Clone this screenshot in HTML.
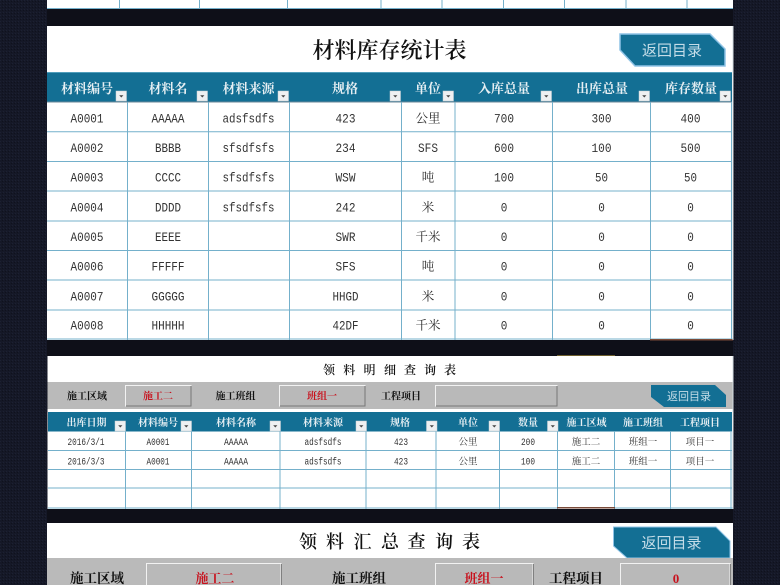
<!DOCTYPE html>
<html lang="zh"><head><meta charset="utf-8"><title>材料库存统计表</title>
<style>
html,body{margin:0;padding:0;background:#151827;width:780px;height:585px;overflow:hidden}
svg{display:block}
text{text-anchor:middle;font-family:"Liberation Sans","Noto Serif CJK SC",serif;fill:#333}
.m{font-family:"Liberation Mono","Noto Serif CJK SC",monospace;font-size:13px;fill:#333}
.s{font-family:"Liberation Mono","Noto Serif CJK SC",monospace;font-size:10px;fill:#333}
.c{font-family:"Noto Serif CJK SC",serif;font-size:12.5px;fill:#2c2c2c}
.c2{font-family:"Noto Serif CJK SC",serif;font-size:9.5px;fill:#333}
.h{font-family:"Noto Serif CJK SC",serif;font-size:13px;font-weight:700;fill:#e6eff3}
.h2{font-family:"Noto Serif CJK SC",serif;font-size:10px;font-weight:700;fill:#e6eff3}
.l{font-family:"Noto Serif CJK SC",serif;font-size:10px;font-weight:700;fill:#111}
.r{font-family:"Noto Serif CJK SC",serif;font-size:10px;font-weight:700;fill:#c8101c}
.L{font-family:"Noto Serif CJK SC",serif;font-size:13.5px;font-weight:700;fill:#111}
.R{font-family:"Noto Serif CJK SC",serif;font-size:13px;font-weight:700;fill:#c8101c}
.b{font-family:"Noto Sans CJK SC",sans-serif;fill:#c5dde8}
.t{font-family:"Noto Serif CJK SC",serif;font-weight:600;fill:#111}
.g line{stroke:#74b0cb;stroke-width:1}
</style></head><body>
<svg width="780" height="585" viewBox="0 0 780 585" xmlns="http://www.w3.org/2000/svg">
<defs>
<pattern id="tx" width="3" height="3" patternUnits="userSpaceOnUse"><rect width="3" height="3" fill="#151827"/><rect width="1" height="1" fill="#1c2032"/><rect x="2" y="1" width="1" height="1" fill="#0f111d"/></pattern>
<g id="f"><rect width="10.500" height="10" fill="#eef0f2" stroke="#c9cfd4" stroke-width=".5"/><path d="M3.200 4.200h4.200l-2.100 2.300z" fill="#444"/></g>
</defs>
<rect width="780" height="585" fill="url(#tx)"/>
<rect x="47" y="9" width="686" height="17" fill="#0e0f18"/>
<rect x="47" y="340" width="686" height="16" fill="#0e0f18"/>
<rect x="47" y="509" width="686" height="14" fill="#0e0f18"/>

<!-- top fragment -->
<rect x="47" y="0" width="686" height="9" fill="#fff"/>
<g class="g">
<line x1="47" y1="8.500" x2="733" y2="8.500"/>
<line x1="119.500" y1="0" x2="119.500" y2="9"/><line x1="199.500" y1="0" x2="199.500" y2="9"/><line x1="287.500" y1="0" x2="287.500" y2="9"/><line x1="381" y1="0" x2="381" y2="9"/><line x1="442" y1="0" x2="442" y2="9"/><line x1="503.500" y1="0" x2="503.500" y2="9"/><line x1="564.500" y1="0" x2="564.500" y2="9"/><line x1="626" y1="0" x2="626" y2="9"/><line x1="687" y1="0" x2="687" y2="9"/>
</g>

<!-- panel 1 -->
<rect x="47" y="26" width="686" height="314" fill="#fff"/>
<rect x="47" y="72" width="685" height="30" fill="#136f94"/>
<rect x="47" y="72" width="685" height="1" fill="#4f9dbb"/>
<rect x="47" y="101.500" width="685" height="1" fill="#6b8797"/>
<g class="g">
<line x1="47" y1="131.800" x2="732" y2="131.800"/><line x1="47" y1="161.500" x2="732" y2="161.500"/><line x1="47" y1="191" x2="732" y2="191"/><line x1="47" y1="221" x2="732" y2="221"/><line x1="47" y1="250.500" x2="732" y2="250.500"/><line x1="47" y1="280" x2="732" y2="280"/><line x1="47" y1="310" x2="732" y2="310"/><line x1="47" y1="339" x2="733" y2="339"/>
<line x1="127.500" y1="102" x2="127.500" y2="340"/><line x1="208.500" y1="102" x2="208.500" y2="340"/><line x1="289.500" y1="102" x2="289.500" y2="340"/><line x1="401.500" y1="102" x2="401.500" y2="340"/><line x1="455" y1="102" x2="455" y2="340"/><line x1="552.500" y1="102" x2="552.500" y2="340"/><line x1="650.500" y1="102" x2="650.500" y2="340"/><line x1="731.500" y1="102" x2="731.500" y2="340"/>
</g>
<rect x="650" y="339" width="83" height="1.500" fill="#7a4a38"/>
<text class="t" x="389.500" y="58" font-size="22">材料库存统计表</text>
<polygon points="620,34 710,34 725,49 725,66 635,66 620,50" fill="#136f94" stroke="#8fc3e6" stroke-width="1.500"/>
<text class="b" x="672" y="55.500" font-size="15">返回目录</text>

<text class="h" x="87" y="93">材料编号</text><text class="h" x="168" y="93">材料名</text><text class="h" x="248.500" y="93">材料来源</text><text class="h" x="345" y="93">规格</text><text class="h" x="428" y="93">单位</text><text class="h" x="504" y="93">入库总量</text><text class="h" x="602" y="93">出库总量</text><text class="h" x="691" y="93">库存数量</text>
<use href="#f" x="116" y="91"/><use href="#f" x="197" y="91"/><use href="#f" x="278" y="91"/><use href="#f" x="390" y="91"/><use href="#f" x="443" y="91"/><use href="#f" x="541" y="91"/><use href="#f" x="639" y="91"/><use href="#f" x="720" y="91"/>

<g lengthAdjust="spacingAndGlyphs">
<text class="m" x="87" y="122.500" textLength="33" lengthAdjust="spacingAndGlyphs">A0001</text><text class="m" x="168" y="122.500" textLength="33" lengthAdjust="spacingAndGlyphs">AAAAA</text><text class="m" x="248.500" y="122.500" textLength="52" lengthAdjust="spacingAndGlyphs">adsfsdfs</text><text class="m" x="345.500" y="122.500" textLength="20" lengthAdjust="spacingAndGlyphs">423</text><text class="c" x="428" y="122.500">公里</text><text class="m" x="504" y="122.500" textLength="20" lengthAdjust="spacingAndGlyphs">700</text><text class="m" x="601.500" y="122.500" textLength="20" lengthAdjust="spacingAndGlyphs">300</text><text class="m" x="690.500" y="122.500" textLength="20" lengthAdjust="spacingAndGlyphs">400</text>
<text class="m" x="87" y="152" textLength="33" lengthAdjust="spacingAndGlyphs">A0002</text><text class="m" x="168" y="152" textLength="26" lengthAdjust="spacingAndGlyphs">BBBB</text><text class="m" x="248.500" y="152" textLength="52" lengthAdjust="spacingAndGlyphs">sfsdfsfs</text><text class="m" x="345.500" y="152" textLength="20" lengthAdjust="spacingAndGlyphs">234</text><text class="m" x="428" y="152" textLength="20" lengthAdjust="spacingAndGlyphs">SFS</text><text class="m" x="504" y="152" textLength="20" lengthAdjust="spacingAndGlyphs">600</text><text class="m" x="601.500" y="152" textLength="20" lengthAdjust="spacingAndGlyphs">100</text><text class="m" x="690.500" y="152" textLength="20" lengthAdjust="spacingAndGlyphs">500</text>
<text class="m" x="87" y="181.500" textLength="33" lengthAdjust="spacingAndGlyphs">A0003</text><text class="m" x="168" y="181.500" textLength="26" lengthAdjust="spacingAndGlyphs">CCCC</text><text class="m" x="248.500" y="181.500" textLength="52" lengthAdjust="spacingAndGlyphs">sfsdfsfs</text><text class="m" x="345.500" y="181.500" textLength="20" lengthAdjust="spacingAndGlyphs">WSW</text><text class="c" x="428" y="181.500">吨</text><text class="m" x="504" y="181.500" textLength="20" lengthAdjust="spacingAndGlyphs">100</text><text class="m" x="601.500" y="181.500" textLength="13" lengthAdjust="spacingAndGlyphs">50</text><text class="m" x="690.500" y="181.500" textLength="13" lengthAdjust="spacingAndGlyphs">50</text>
<text class="m" x="87" y="211.500" textLength="33" lengthAdjust="spacingAndGlyphs">A0004</text><text class="m" x="168" y="211.500" textLength="26" lengthAdjust="spacingAndGlyphs">DDDD</text><text class="m" x="248.500" y="211.500" textLength="52" lengthAdjust="spacingAndGlyphs">sfsdfsfs</text><text class="m" x="345.500" y="211.500" textLength="20" lengthAdjust="spacingAndGlyphs">242</text><text class="c" x="428" y="211.500">米</text><text class="m" x="504" y="211.500" textLength="6.600" lengthAdjust="spacingAndGlyphs">0</text><text class="m" x="601.500" y="211.500" textLength="6.600" lengthAdjust="spacingAndGlyphs">0</text><text class="m" x="690.500" y="211.500" textLength="6.600" lengthAdjust="spacingAndGlyphs">0</text>
<text class="m" x="87" y="241" textLength="33" lengthAdjust="spacingAndGlyphs">A0005</text><text class="m" x="168" y="241" textLength="26" lengthAdjust="spacingAndGlyphs">EEEE</text><text class="m" x="345.500" y="241" textLength="20" lengthAdjust="spacingAndGlyphs">SWR</text><text class="c" x="428" y="241">千米</text><text class="m" x="504" y="241" textLength="6.600" lengthAdjust="spacingAndGlyphs">0</text><text class="m" x="601.500" y="241" textLength="6.600" lengthAdjust="spacingAndGlyphs">0</text><text class="m" x="690.500" y="241" textLength="6.600" lengthAdjust="spacingAndGlyphs">0</text>
<text class="m" x="87" y="270.500" textLength="33" lengthAdjust="spacingAndGlyphs">A0006</text><text class="m" x="168" y="270.500" textLength="33" lengthAdjust="spacingAndGlyphs">FFFFF</text><text class="m" x="345.500" y="270.500" textLength="20" lengthAdjust="spacingAndGlyphs">SFS</text><text class="c" x="428" y="270.500">吨</text><text class="m" x="504" y="270.500" textLength="6.600" lengthAdjust="spacingAndGlyphs">0</text><text class="m" x="601.500" y="270.500" textLength="6.600" lengthAdjust="spacingAndGlyphs">0</text><text class="m" x="690.500" y="270.500" textLength="6.600" lengthAdjust="spacingAndGlyphs">0</text>
<text class="m" x="87" y="300.500" textLength="33" lengthAdjust="spacingAndGlyphs">A0007</text><text class="m" x="168" y="300.500" textLength="33" lengthAdjust="spacingAndGlyphs">GGGGG</text><text class="m" x="345.500" y="300.500" textLength="26" lengthAdjust="spacingAndGlyphs">HHGD</text><text class="c" x="428" y="300.500">米</text><text class="m" x="504" y="300.500" textLength="6.600" lengthAdjust="spacingAndGlyphs">0</text><text class="m" x="601.500" y="300.500" textLength="6.600" lengthAdjust="spacingAndGlyphs">0</text><text class="m" x="690.500" y="300.500" textLength="6.600" lengthAdjust="spacingAndGlyphs">0</text>
<text class="m" x="87" y="329.500" textLength="33" lengthAdjust="spacingAndGlyphs">A0008</text><text class="m" x="168" y="329.500" textLength="33" lengthAdjust="spacingAndGlyphs">HHHHH</text><text class="m" x="345.500" y="329.500" textLength="26" lengthAdjust="spacingAndGlyphs">42DF</text><text class="c" x="428" y="329.500">千米</text><text class="m" x="504" y="329.500" textLength="6.600" lengthAdjust="spacingAndGlyphs">0</text><text class="m" x="601.500" y="329.500" textLength="6.600" lengthAdjust="spacingAndGlyphs">0</text><text class="m" x="690.500" y="329.500" textLength="6.600" lengthAdjust="spacingAndGlyphs">0</text>
</g>

<!-- panel 2 -->
<rect x="47.500" y="356" width="685.500" height="153" fill="#fff"/>
<rect x="557" y="355" width="58" height="1" fill="#6e5f2e"/>
<text class="t" x="329" y="374" font-size="12" font-weight="700">领</text><text class="t" x="349.300" y="374" font-size="12">料</text><text class="t" x="369.500" y="374" font-size="12">明</text><text class="t" x="390" y="374" font-size="12">细</text><text class="t" x="410" y="374" font-size="12">查</text><text class="t" x="430" y="374" font-size="12">询</text><text class="t" x="450" y="374" font-size="12">表</text>
<rect x="47.500" y="382" width="685.500" height="27" fill="#bababa"/>
<g fill="#b9b9b9" stroke-width="1">
<rect x="125.500" y="385.500" width="65.500" height="20.500" stroke="#f2f2f2"/><path d="M191 386v20h-65" fill="none" stroke="#777"/>
<rect x="279.500" y="385.500" width="85.500" height="20.500" stroke="#f2f2f2"/><path d="M365 386v20h-85" fill="none" stroke="#777"/>
<rect x="435.500" y="385.500" width="121.500" height="20.500" stroke="#f2f2f2"/><path d="M557 386v20h-121" fill="none" stroke="#777"/>
</g>
<text class="l" x="87" y="399.500">施工区域</text><text class="r" x="158" y="399.500">施工二</text><text class="l" x="235.500" y="399.500">施工班组</text><text class="r" x="322" y="399.500">班组一</text><text class="l" x="401" y="399.500">工程项目</text>
<polygon points="651,385 715,385 726,395 726,407 664,407 651,397" fill="#136f94"/>
<text class="b" x="689" y="400" font-size="11">返回目录</text>
<rect x="48" y="412" width="684" height="19.500" fill="#136f94"/>
<g class="g">
<line x1="48" y1="450.500" x2="732" y2="450.500"/><line x1="48" y1="469.500" x2="732" y2="469.500"/><line x1="48" y1="488" x2="732" y2="488"/><line x1="48" y1="508" x2="733" y2="508"/>
<line x1="125.500" y1="431" x2="125.500" y2="509"/><line x1="191.500" y1="431" x2="191.500" y2="509"/><line x1="280" y1="431" x2="280" y2="509"/><line x1="366" y1="431" x2="366" y2="509"/><line x1="436" y1="431" x2="436" y2="509"/><line x1="499.500" y1="431" x2="499.500" y2="509"/><line x1="557.500" y1="431" x2="557.500" y2="509"/><line x1="614.500" y1="431" x2="614.500" y2="509"/><line x1="670.500" y1="431" x2="670.500" y2="509"/><line x1="731" y1="431" x2="731" y2="509"/>
</g>
<rect x="557" y="507" width="58" height="1.500" fill="#7a4a38"/>
<text class="h2" x="86.500" y="426">出库日期</text><text class="h2" x="158" y="426">材料编号</text><text class="h2" x="236" y="426">材料名称</text><text class="h2" x="323" y="426">材料来源</text><text class="h2" x="400" y="426">规格</text><text class="h2" x="468" y="426">单位</text><text class="h2" x="528" y="426">数量</text><text class="h2" x="586.500" y="426">施工区域</text><text class="h2" x="643" y="426">施工班组</text><text class="h2" x="700" y="426">工程项目</text>
<use href="#f" x="115" y="421"/><use href="#f" x="181" y="421"/><use href="#f" x="270" y="421"/><use href="#f" x="356" y="421"/><use href="#f" x="426.500" y="421"/><use href="#f" x="489" y="421"/><use href="#f" x="547.500" y="421"/>
<text class="s" x="86" y="445" textLength="37" lengthAdjust="spacingAndGlyphs">2016/3/1</text><text class="s" x="158" y="445" textLength="23" lengthAdjust="spacingAndGlyphs">A0001</text><text class="s" x="236" y="445" textLength="24" lengthAdjust="spacingAndGlyphs">AAAAA</text><text class="s" x="323" y="445" textLength="37" lengthAdjust="spacingAndGlyphs">adsfsdfs</text><text class="s" x="401" y="445" textLength="14" lengthAdjust="spacingAndGlyphs">423</text><text class="c2" x="468" y="445">公里</text><text class="s" x="528" y="445" textLength="14" lengthAdjust="spacingAndGlyphs">200</text><text class="c2" x="586" y="445">施工二</text><text class="c2" x="643" y="445">班组一</text><text class="c2" x="700" y="445">项目一</text>
<text class="s" x="86" y="464.500" textLength="37" lengthAdjust="spacingAndGlyphs">2016/3/3</text><text class="s" x="158" y="464.500" textLength="23" lengthAdjust="spacingAndGlyphs">A0001</text><text class="s" x="236" y="464.500" textLength="24" lengthAdjust="spacingAndGlyphs">AAAAA</text><text class="s" x="323" y="464.500" textLength="37" lengthAdjust="spacingAndGlyphs">adsfsdfs</text><text class="s" x="401" y="464.500" textLength="14" lengthAdjust="spacingAndGlyphs">423</text><text class="c2" x="468" y="464.500">公里</text><text class="s" x="528" y="464.500" textLength="14" lengthAdjust="spacingAndGlyphs">100</text><text class="c2" x="586" y="464.500">施工二</text><text class="c2" x="643" y="464.500">班组一</text><text class="c2" x="700" y="464.500">项目一</text>

<!-- panel 3 -->
<rect x="47" y="523" width="686" height="62" fill="#fff"/>
<text class="t" x="308" y="548" font-size="18">领</text><text class="t" x="335" y="548" font-size="18">料</text><text class="t" x="362.500" y="548" font-size="18">汇</text><text class="t" x="390" y="548" font-size="18">总</text><text class="t" x="416.500" y="548" font-size="18">查</text><text class="t" x="444" y="548" font-size="18">询</text><text class="t" x="471" y="548" font-size="18">表</text>
<polygon points="613.500,527 716,527 730,541 730,558 627,558 613.500,546" fill="#136f94" stroke="#8fc3e6" stroke-width="1"/>
<text class="b" x="671.500" y="548" font-size="15">返回目录</text>
<rect x="47" y="558" width="686" height="27" fill="#bababa"/>
<g fill="#b9b9b9" stroke="#f2f2f2">
<rect x="146.500" y="563.500" width="134.500" height="30"/><rect x="435.500" y="563.500" width="97.500" height="30"/><rect x="620.500" y="563.500" width="109.500" height="30"/>
</g>
<path d="M281.500 564v21M533.500 564v21M730.500 564v21" stroke="#808080" fill="none"/>
<text class="L" x="97" y="583">施工区域</text><text class="R" x="215" y="583">施工二</text><text class="L" x="359" y="583">施工班组</text><text class="R" x="484" y="583">班组一</text><text class="L" x="576" y="583">工程项目</text><text class="R" x="676" y="583" style="font-family:'Liberation Serif',serif">0</text>

<rect x="732.500" y="26" width="1" height="314" fill="#d5dde0"/>
<rect x="732.500" y="356" width="1" height="153" fill="#d5dde0"/>
</svg>
</body></html>
